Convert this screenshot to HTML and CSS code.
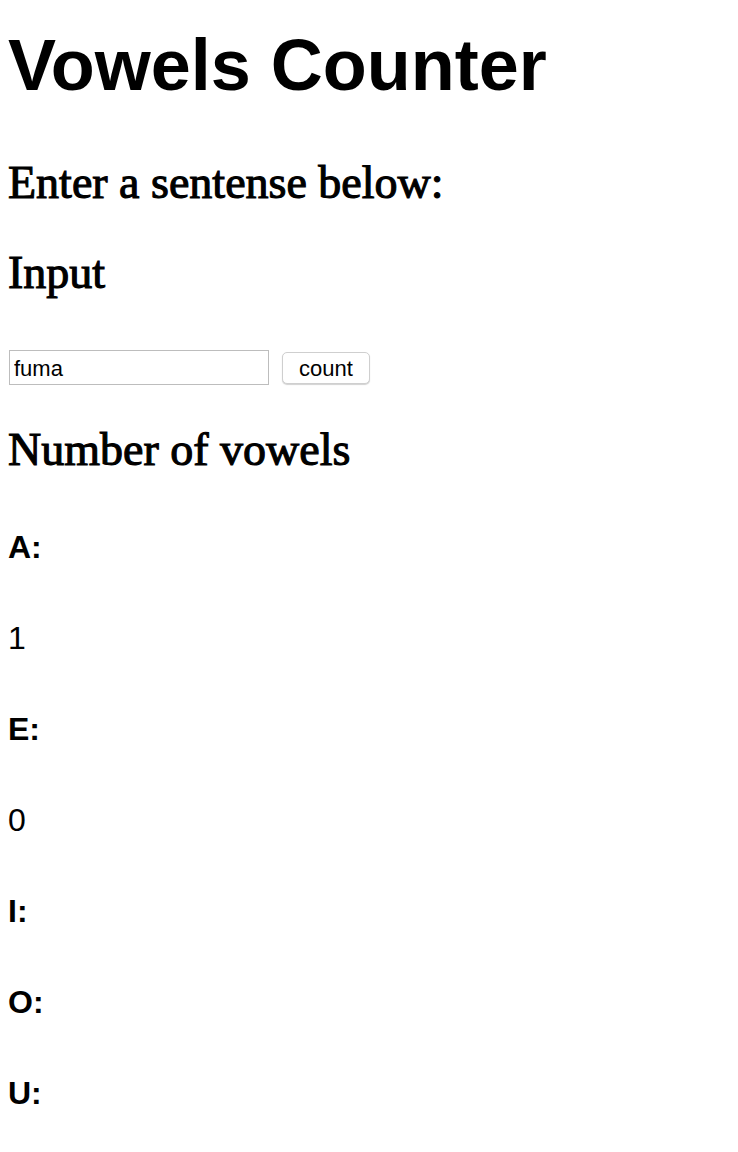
FILE: index.html
```html
<!DOCTYPE html>
<html lang="en">
<head>
<meta charset="utf-8">
<title>Vowels Counter</title>
<link rel="stylesheet" href="styles.css">
</head>
<body>
  <h1 class="title">Vowels Counter</h1>
  <h2 class="heading heading-intro">Enter a sentense below:</h2>
  <h2 class="heading heading-input">Input</h2>
  <form class="input-row" onsubmit="return false;">
    <input class="text-input" type="text" value="fuma">
    <button class="count-button" type="button">count</button>
  </form>
  <h2 class="heading heading-result">Number of vowels</h2>
  <div class="results">
    <h3 class="vowel-label">A:</h3>
    <p class="vowel-value">1</p>
    <h3 class="vowel-label">E:</h3>
    <p class="vowel-value">0</p>
    <h3 class="vowel-label">I:</h3>
    <h3 class="vowel-label">O:</h3>
    <h3 class="vowel-label">U:</h3>
  </div>
</body>
</html>
```
FILE: styles.css
```css
html, body {
  background: #ffffff;
}
body {
  margin: 0;
  padding: 25px 8px 0 8px;
  color: #000000;
}
.title {
  margin: 0;
  font-family: "Liberation Sans", Arial, sans-serif;
  font-weight: 700;
  font-size: 72px;
  line-height: 80px;
  letter-spacing: 0;
}
.heading {
  margin: 0;
  font-family: "Liberation Serif", "Times New Roman", serif;
  font-weight: 400;
  font-size: 46px;
  line-height: 50px;
  -webkit-text-stroke: 1.1px #000;
}
.heading-intro {
  margin-top: 53px;
}
.heading-input {
  margin-top: 40px;
}
.heading-result {
  margin-top: 40px;
}
.input-row {
  margin: 52px 0 0 1px;
  display: flex;
  align-items: center;
  gap: 13px;
  height: 35px;
}
.text-input {
  box-sizing: border-box;
  width: 260px;
  height: 35px;
  margin: 0;
  padding: 2px 4px 0 4px;
  border: 1px solid #bdbdbd;
  border-radius: 0;
  font-family: "Liberation Sans", Arial, sans-serif;
  font-size: 22px;
  color: #000;
  outline: none;
}
.count-button {
  box-sizing: border-box;
  width: 88px;
  height: 32px;
  margin: 1px 0 0 0;
  padding: 2px 0 0 0;
  background: #ffffff;
  border: 1px solid #cfcfcf;
  border-radius: 5px;
  box-shadow: 0 1px 1px rgba(0, 0, 0, 0.18);
  font-family: "Liberation Sans", Arial, sans-serif;
  font-size: 22px;
  color: #000;
}
.results {
  margin-top: 52px;
  display: flex;
  flex-direction: column;
  gap: 51px;
}
.vowel-label {
  margin: 0;
  font-family: "Liberation Sans", Arial, sans-serif;
  font-weight: 700;
  font-size: 32px;
  line-height: 40px;
}
.vowel-value {
  margin: 0;
  font-family: "Liberation Sans", Arial, sans-serif;
  font-weight: 400;
  font-size: 32px;
  line-height: 40px;
}
```
